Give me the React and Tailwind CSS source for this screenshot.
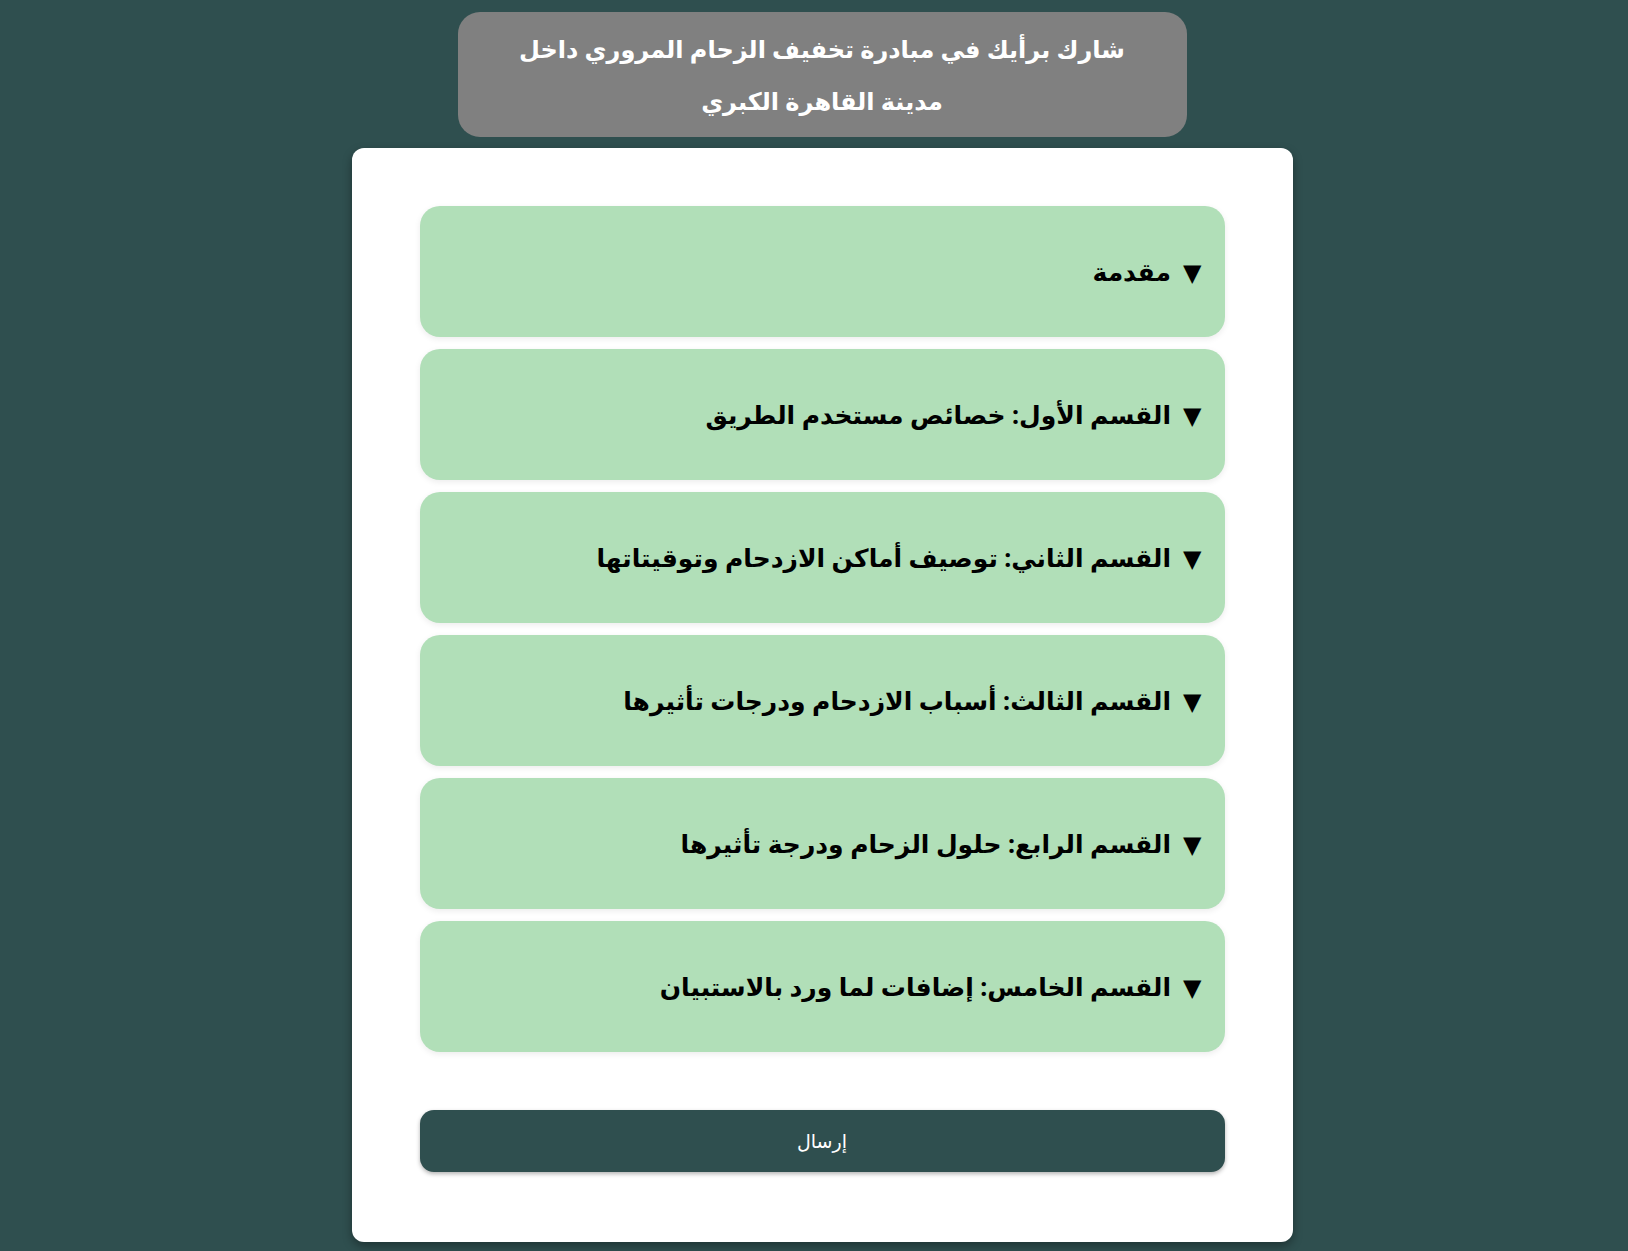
const sections = [
  "مقدمة",
  "القسم الأول: خصائص مستخدم الطريق",
  "القسم الثاني: توصيف أماكن الازدحام وتوقيتاتها",
  "القسم الثالث: أسباب الازدحام ودرجات تأثيرها",
  "القسم الرابع: حلول الزحام ودرجة تأثيرها",
  "القسم الخامس: إضافات لما ورد بالاستبيان",
];

function App() {
  return (
    <div
      dir="rtl"
      className="flex min-h-screen flex-col items-center bg-[#2f4f4f] pt-3 pl-4 font-['Noto_Sans','DejaVu_Sans',sans-serif]"
    >
      <header className="flex h-[125px] w-[729px] items-center justify-center rounded-[22px] bg-[#808080] px-6">
        <h1 className="text-center text-[24px] font-bold leading-[52px] text-white">
          شارك برأيك في مبادرة تخفيف الزحام المروري داخل
          <br />
          مدينة القاهرة الكبري
        </h1>
      </header>

      <main className="mt-[11px] w-[941px] rounded-xl bg-white px-[68px] pt-[58px] pb-[70px] shadow-[0_4px_10px_rgba(0,0,0,0.35)]">
        <div className="flex flex-col gap-[12px]">
          {sections.map((title) => (
            <div
              key={title}
              className="flex h-[131px] cursor-pointer items-center gap-3 rounded-[20px] bg-[#b1dfb8] px-[23px] text-[25px] font-bold text-black shadow-[0_2px_6px_rgba(0,0,0,0.08)]"
            >
              <span className="text-[24px]">▼</span>
              <span>{title}</span>
            </div>
          ))}
        </div>

        <button
          type="button"
          className="mt-[58px] h-[62px] w-full rounded-[14px] bg-[#2f4f4f] text-[19px] text-white shadow-[0_2px_4px_rgba(0,0,0,0.3)]"
        >
          إرسال
        </button>
      </main>
    </div>
  );
}

export default App;
